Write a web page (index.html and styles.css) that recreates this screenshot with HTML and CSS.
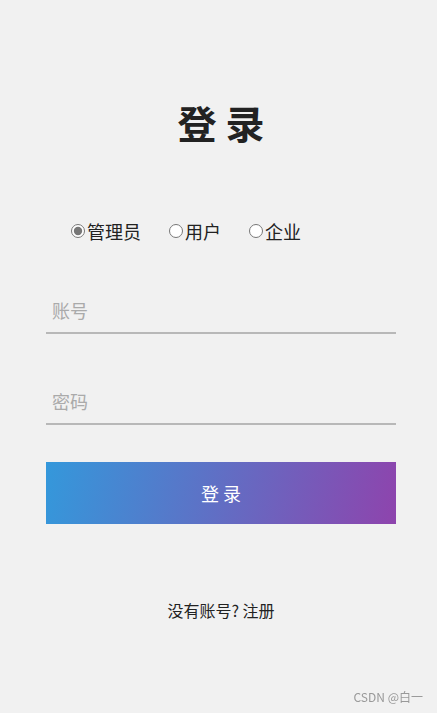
FILE: index.html
```html
<!DOCTYPE html>
<html lang="zh-CN">
<head>
    <meta charset="UTF-8">
    <meta name="viewport" content="width=device-width, initial-scale=1.0">
    <title>登录</title>
    <link rel="stylesheet" href="styles.css">
</head>
<body>
    <div class="login">
        <h1 class="title">登 录</h1>

        <!-- Role -->
        <div class="roles">
            <label class="role"><input type="radio" name="role" checked>管理员</label>
            <label class="role"><input type="radio" name="role">用户</label>
            <label class="role"><input type="radio" name="role">企业</label>
        </div>

        <input class="field" type="text" placeholder="账号">
        <input class="field" type="password" placeholder="密码">

        <button class="btn">登 录</button>

        <p class="register">没有账号? 注册</p>
    </div>

    <div class="mark">CSDN @白一</div>
</body>
</html>
```

FILE: styles.css
```css
/* General */
body {
    margin: 0;
    height: 100vh;
    background-color: #f1f1f1;
    font-family: 'Noto Sans CJK SC', 'Noto Sans', sans-serif;
    color: #222;
    overflow: hidden;
}

.login {
    width: 350px;
    margin-left: 46px;
    padding-top: 94px;
    display: flex;
    flex-direction: column;
}

/* Title */
.title {
    margin: 0;
    text-align: center;
    font-size: 39px;
    font-weight: bold;
    line-height: 56px;
    color: #222;
}

/* Roles */
.roles {
    display: flex;
    gap: 23px;
    padding-left: 20px;
    margin-top: 68px;
    font-size: 18px;
    line-height: 26px;
}

.role {
    display: flex;
    align-items: center;
}

.role input {
    margin: 0 2px 0 5px;
    width: 14px;
    height: 14px;
    accent-color: #777;
}

/* Inputs */
.field {
    height: 44px;
    margin-top: 44px;
    padding: 0 6px;
    border: none;
    border-bottom: 2px solid #b8b8b8;
    background: transparent;
    font-family: inherit;
    font-size: 18px;
    outline: none;
}

.field + .field {
    margin-top: 45px;
}

.field::placeholder {
    color: #aaa;
}

/* Button */
.btn {
    margin-top: 37px;
    height: 62px;
    border: none;
    background: linear-gradient(100deg, #3498db, #8e44ad);
    color: #fff;
    font-family: inherit;
    font-size: 18px;
    cursor: pointer;
}

.register {
    margin: 75px 0 0;
    text-align: center;
    font-size: 16px;
    line-height: 22px;
    color: #222;
}

/* Watermark */
.mark {
    position: fixed;
    right: 14px;
    bottom: 8px;
    font-size: 12px;
    color: #999;
}
```
